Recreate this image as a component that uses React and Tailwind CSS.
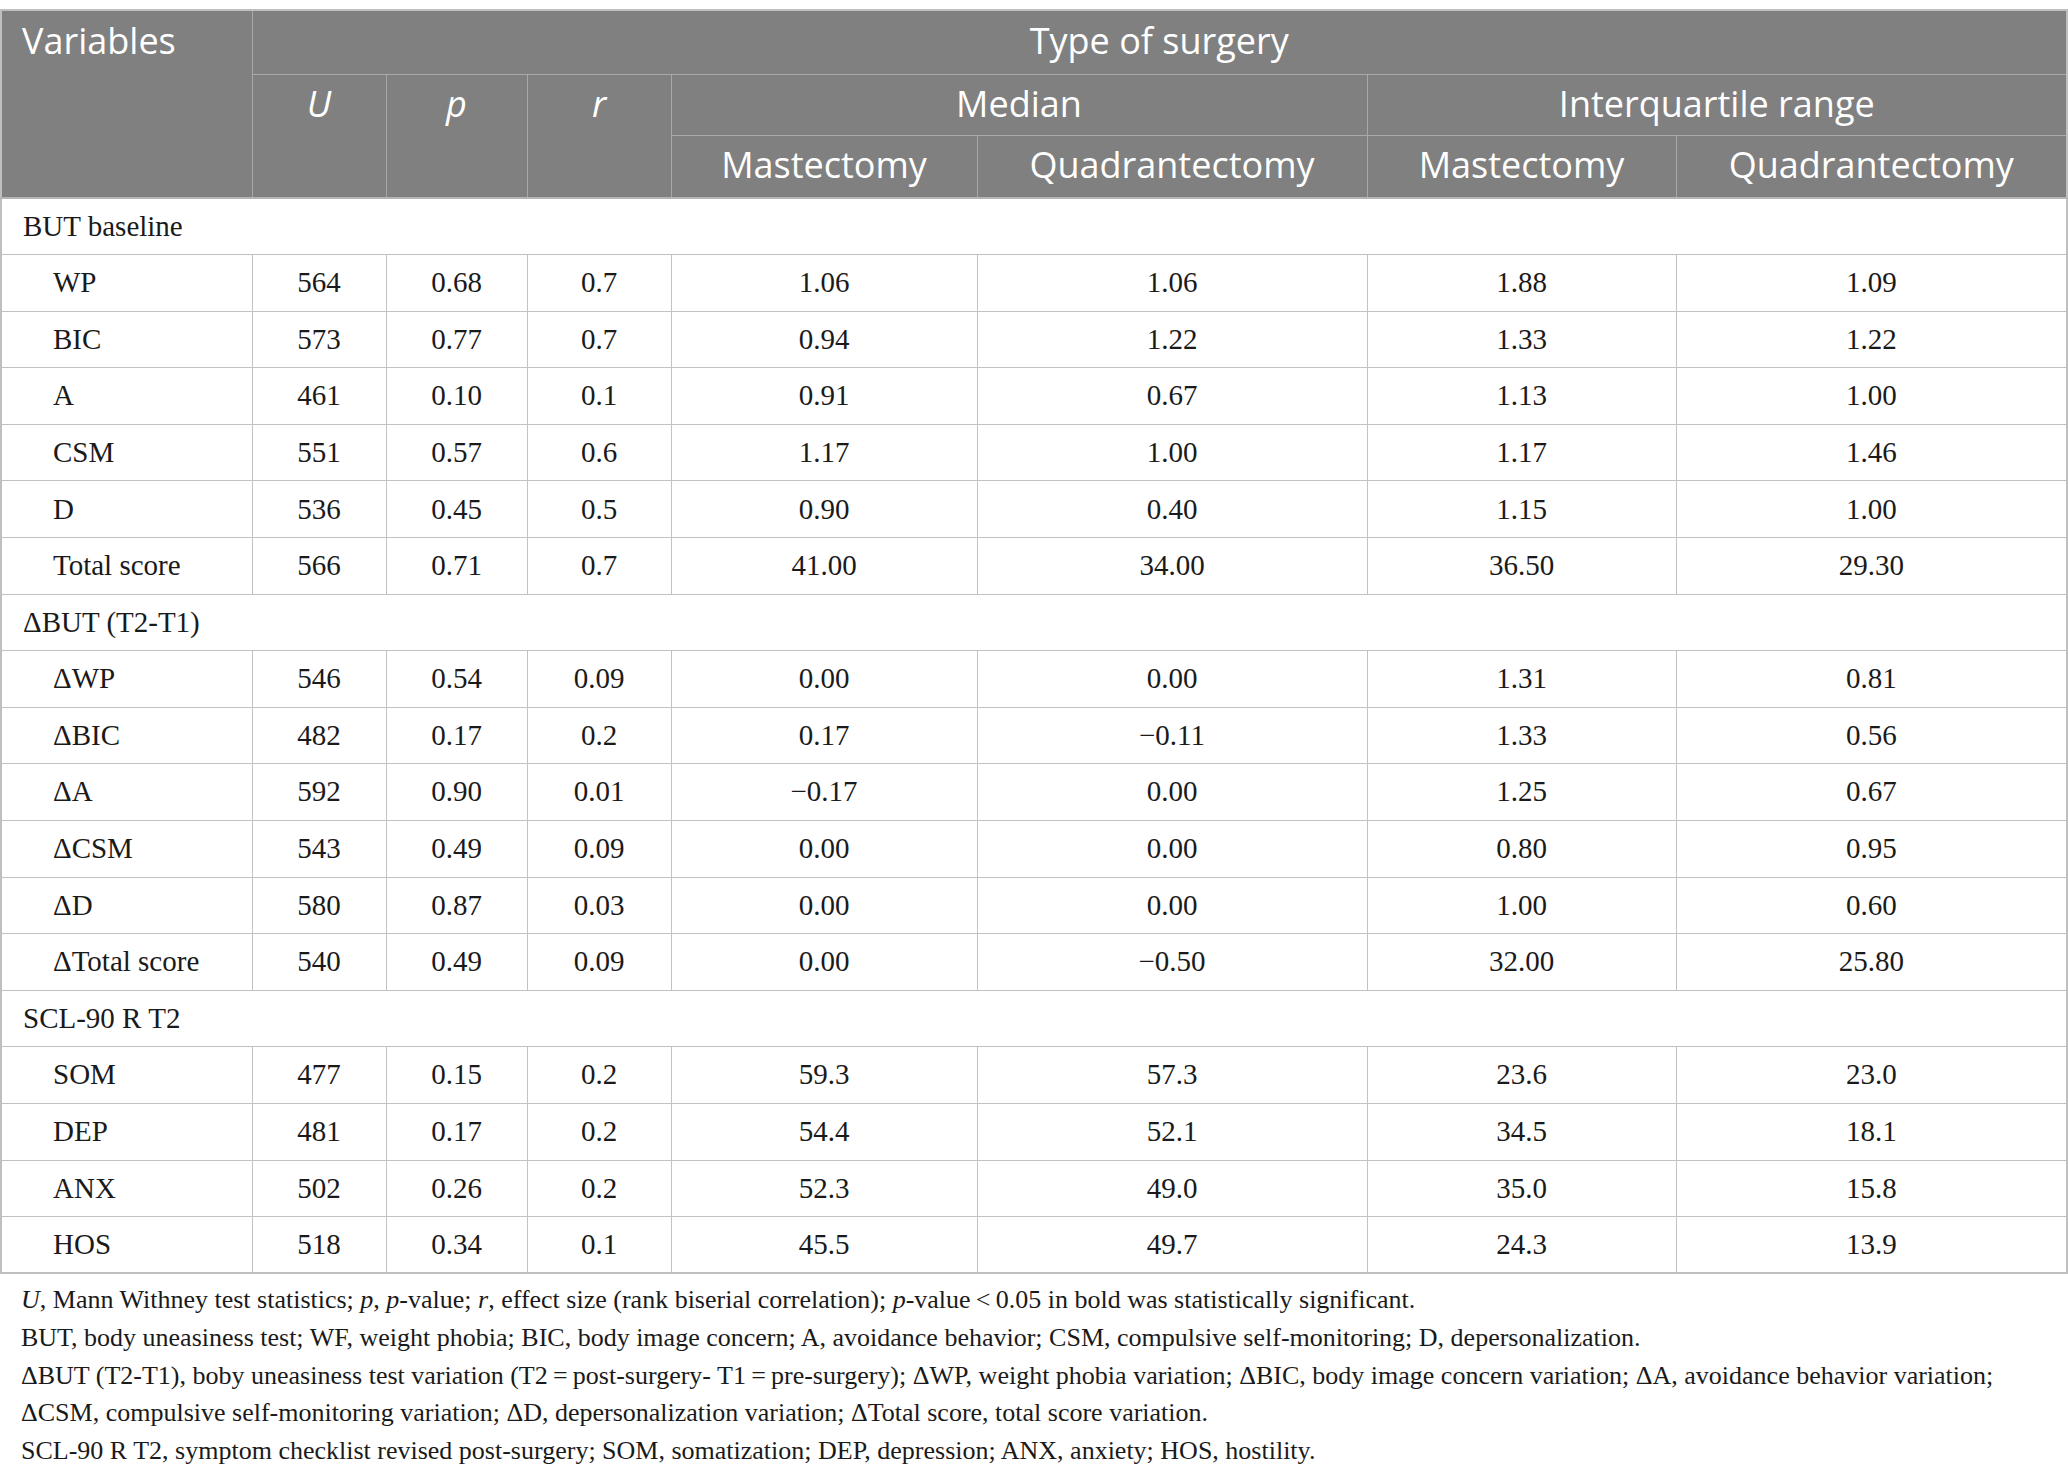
const M = "\u2212";

const rows = [
  { section: "BUT baseline" },
  ["WP", "564", "0.68", "0.7", "1.06", "1.06", "1.88", "1.09"],
  ["BIC", "573", "0.77", "0.7", "0.94", "1.22", "1.33", "1.22"],
  ["A", "461", "0.10", "0.1", "0.91", "0.67", "1.13", "1.00"],
  ["CSM", "551", "0.57", "0.6", "1.17", "1.00", "1.17", "1.46"],
  ["D", "536", "0.45", "0.5", "0.90", "0.40", "1.15", "1.00"],
  ["Total score", "566", "0.71", "0.7", "41.00", "34.00", "36.50", "29.30"],
  { section: "\u0394BUT (T2-T1)" },
  ["\u0394WP", "546", "0.54", "0.09", "0.00", "0.00", "1.31", "0.81"],
  ["\u0394BIC", "482", "0.17", "0.2", "0.17", M + "0.11", "1.33", "0.56"],
  ["\u0394A", "592", "0.90", "0.01", M + "0.17", "0.00", "1.25", "0.67"],
  ["\u0394CSM", "543", "0.49", "0.09", "0.00", "0.00", "0.80", "0.95"],
  ["\u0394D", "580", "0.87", "0.03", "0.00", "0.00", "1.00", "0.60"],
  ["\u0394Total score", "540", "0.49", "0.09", "0.00", M + "0.50", "32.00", "25.80"],
  { section: "SCL-90 R T2" },
  ["SOM", "477", "0.15", "0.2", "59.3", "57.3", "23.6", "23.0"],
  ["DEP", "481", "0.17", "0.2", "54.4", "52.1", "34.5", "18.1"],
  ["ANX", "502", "0.26", "0.2", "52.3", "49.0", "35.0", "15.8"],
  ["HOS", "518", "0.34", "0.1", "45.5", "49.7", "24.3", "13.9"],
];

const widths = [251, 134, 141, 144, 306, 390, 309, 391];

export default function App() {
  const th = "border border-[#a9a9a9] font-normal align-top";
  return (
    <div className="bg-white w-[2068px] pt-[9px] pb-4">
      <table className="table-fixed border-collapse w-[2068px] border-2 border-[#bfbfbf]">
        <colgroup>
          {widths.map((w, i) => (
            <col key={i} style={{ width: w }} />
          ))}
        </colgroup>
        <thead className="bg-[#808080] text-white font-['Open_Sans',sans-serif] text-[36px] leading-[48px]">
          <tr className="h-[64px]">
            <th rowSpan={3} className={`${th} text-left pl-[20px] pt-[6px]`}>Variables</th>
            <th colSpan={7} className={`${th} text-center pt-[6px]`}>Type of surgery</th>
          </tr>
          <tr className="h-[61px]">
            <th rowSpan={2} className={`${th} text-center pt-[5px] italic`}>U</th>
            <th rowSpan={2} className={`${th} text-center pt-[5px] italic`}>p</th>
            <th rowSpan={2} className={`${th} text-center pt-[5px] italic`}>r</th>
            <th colSpan={2} className={`${th} text-center pt-[5px]`}>Median</th>
            <th colSpan={2} className={`${th} text-center pt-[5px]`}>Interquartile range</th>
          </tr>
          <tr className="h-[63px] border-b-2 border-[#b5b5b5]">
            <th className={`${th} text-center pt-[5px]`}>Mastectomy</th>
            <th className={`${th} text-center pt-[5px]`}>Quadrantectomy</th>
            <th className={`${th} text-center pt-[5px]`}>Mastectomy</th>
            <th className={`${th} text-center pt-[5px]`}>Quadrantectomy</th>
          </tr>
        </thead>
        <tbody className="font-['Liberation_Serif',serif] text-[29px] text-[#1a1a1a]">
          {rows.map((r, i) =>
            r.section ? (
              <tr key={i} className="h-[56.6px]">
                <td colSpan={8} className="border border-[#c2c2c2] pl-[21px] align-middle">
                  {r.section}
                </td>
              </tr>
            ) : (
              <tr key={i} className="h-[56.6px]">
                {r.map((c, j) => (
                  <td
                    key={j}
                    className={`border border-[#c2c2c2] align-middle ${j === 0 ? "text-left pl-[51px]" : "text-center"}`}
                  >
                    {c}
                  </td>
                ))}
              </tr>
            )
          )}
        </tbody>
      </table>
      <div className="font-['Liberation_Serif',serif] text-[26px] leading-[37.7px] text-[#1a1a1a] pl-[21px] pt-[7px]">
        <p>
          <i>U</i>, Mann Withney test statistics; <i>p</i>, <i>p</i>-value; <i>r</i>, effect size (rank biserial correlation); <i>p</i>-value{"\u2009<\u2009"}0.05 in bold was statistically significant.
        </p>
        <p>
          BUT, body uneasiness test; WF, weight phobia; BIC, body image concern; A, avoidance behavior; CSM, compulsive self-monitoring; D, depersonalization.
        </p>
        <p>
          {"\u0394"}BUT (T2-T1), boby uneasiness test variation (T2{"\u2009=\u2009"}post-surgery- T1{"\u2009=\u2009"}pre-surgery); {"\u0394"}WP, weight phobia variation; {"\u0394"}BIC, body image concern variation; {"\u0394"}A, avoidance behavior variation;
        </p>
        <p>
          {"\u0394"}CSM, compulsive self-monitoring variation; {"\u0394"}D, depersonalization variation; {"\u0394"}Total score, total score variation.
        </p>
        <p>
          SCL-90 R T2, symptom checklist revised post-surgery; SOM, somatization; DEP, depression; ANX, anxiety; HOS, hostility.
        </p>
      </div>
    </div>
  );
}
